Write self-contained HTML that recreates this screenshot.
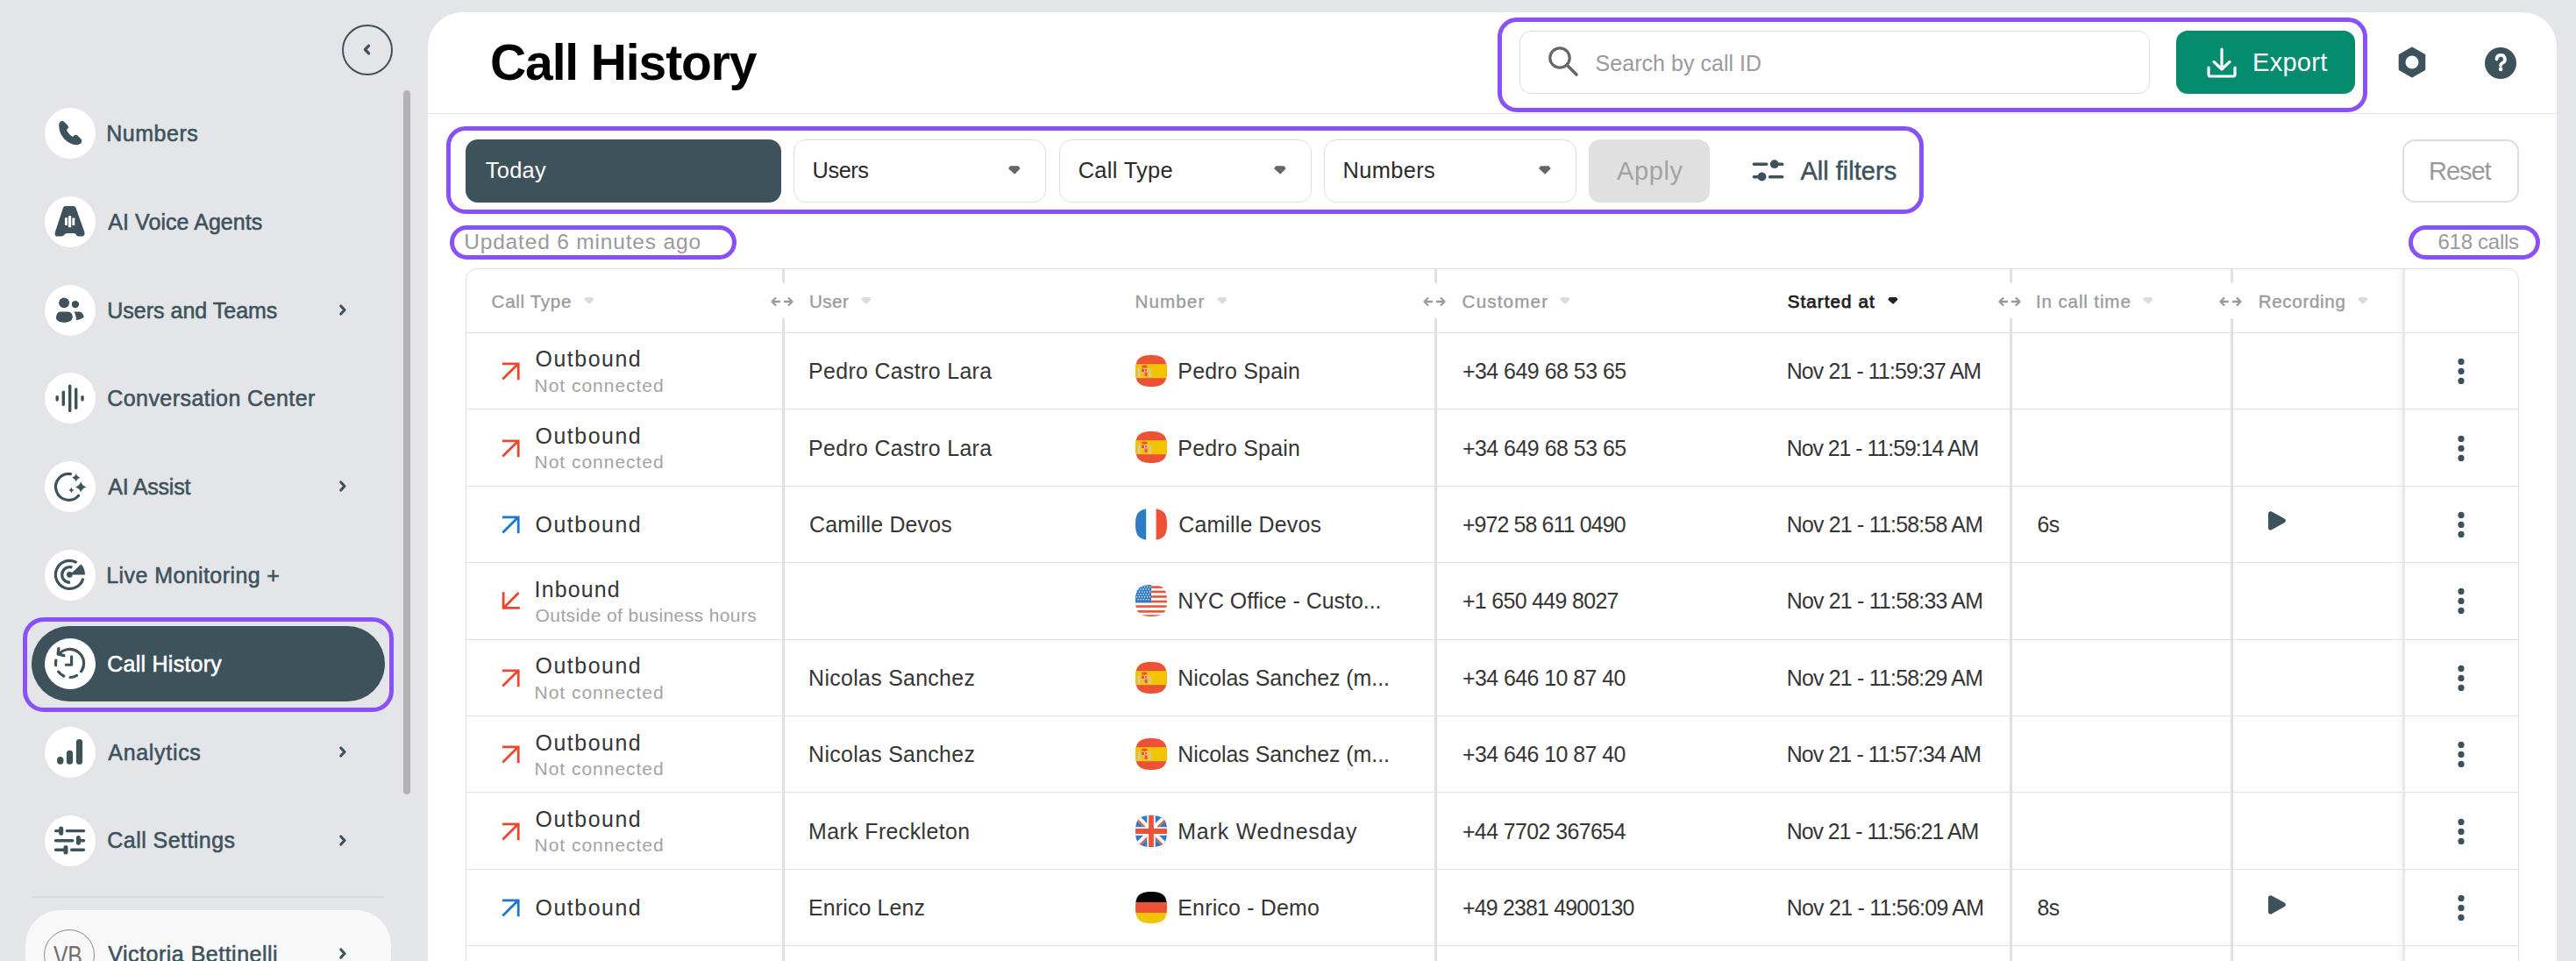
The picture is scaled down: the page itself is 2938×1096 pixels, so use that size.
<!DOCTYPE html><html><head><meta charset="utf-8"><style>html,body{margin:0;padding:0}body{width:2938px;height:1096px;overflow:hidden;position:relative;background:#e4e5e9;font-family:"Liberation Sans",sans-serif}.a{position:absolute}.t{position:absolute;line-height:1em;white-space:nowrap}svg.a{overflow:visible}</style></head><body><div class="a" style="left:390px;top:28px;width:54px;height:54px;border:2px solid #3e525c;border-radius:50%"></div>
<svg class="a" style="left:409px;top:46px" width="20" height="22" viewBox="0 0 20 22"><path d="M11.6 6.2 L7.4 10.5 L11.6 14.8" fill="none" stroke="#3e525c" stroke-width="3.3" stroke-linecap="round" stroke-linejoin="round"/></svg>
<div class="a" style="left:460px;top:103px;width:8px;height:803px;background:#b3b3b3;border-radius:4px"></div>
<div class="a" style="left:26px;top:704px;width:423px;height:108px;box-sizing:border-box;border:5px solid #8950fc;border-radius:24px"></div>
<div class="a" style="left:36px;top:714px;width:403px;height:86px;background:#3e525c;border-radius:43px"></div>
<div class="a" style="left:50.5px;top:123.0px;width:58px;height:58px;background:#fff;border-radius:50%"></div>
<svg class="a" style="left:50px;top:123.0px" width="60" height="60" viewBox="0 0 60 60"><path d="M17.3 21 C17 17.5 18.5 15 21 15 C22 15 22.8 15.5 23.5 16.2 L27.2 19.9 C28.2 20.9 28.2 22.7 27.2 23.7 L25.8 25.2 C27.5 28.5 29.8 31 33 33 L34.6 31.5 C35.6 30.5 37.3 30.5 38.3 31.5 L42.4 35.6 C43.7 36.9 43.6 39.5 41.8 40.8 C40.5 41.8 38.8 42.3 37 42.2 C31 42 25.2 38 21.8 33.5 C19 30 17.5 25.5 17.3 21 Z" fill="#3e525c"/></svg>
<div class="t" style="left:121.30px;top:139.83px;font-size:25px;color:#3e525c;font-weight:400;-webkit-text-stroke:0.55px currentColor;letter-spacing:0.500px">Numbers</div>
<div class="a" style="left:50.5px;top:223.9px;width:58px;height:58px;background:#fff;border-radius:50%"></div>
<svg class="a" style="left:50px;top:223.0px" width="60" height="60" viewBox="0 0 60 60"><path d="M24.7 11.9 H33.7 C35 11.9 36 12.7 36.5 14 L46.3 41.5 C46.9 44 46 46.6 43.8 46.6 H38.8 C37.5 46.6 36.5 43.1 34.5 43.1 H26.5 C24.5 43.1 22 46.6 20.6 46.6 H15 C13 46.6 12.3 44.5 12.8 42 L22 14 C22.5 12.7 23.5 11.9 24.7 11.9 Z" fill="#3e525c"/><rect x="24" y="25.3" width="2.9" height="8.7" fill="#fff"/><rect x="27.9" y="23.1" width="3.3" height="13.1" fill="#fff"/><rect x="32.4" y="25.6" width="2.9" height="8.4" fill="#fff"/></svg>
<div class="t" style="left:123.30px;top:240.73px;font-size:25px;color:#3e525c;font-weight:400;-webkit-text-stroke:0.55px currentColor;letter-spacing:0.064px">AI Voice Agents</div>
<div class="a" style="left:50.5px;top:324.9px;width:58px;height:58px;background:#fff;border-radius:50%"></div>
<svg class="a" style="left:50px;top:324.0px" width="60" height="60" viewBox="0 0 60 60"><circle cx="23.1" cy="21.3" r="5.9" fill="#3e525c"/><circle cx="35.9" cy="23.1" r="4.2" fill="#3e525c"/><path d="M18.5 31.6 H27.5 C30.5 31.6 32.8 34.5 32.8 37.8 C32.8 41.5 28.5 43.8 23.2 43.8 C17.8 43.8 14 41.5 14 38.8 C14 35 15.8 31.6 18.5 31.6 Z" fill="#3e525c"/><path d="M34.3 31.5 H40.3 C43 31.5 45.2 34.5 45.8 37.6 C43.5 39.8 40 41 36.9 41 C37 37.5 36.2 34 34.3 31.5 Z" fill="#3e525c"/></svg>
<div class="t" style="left:122.30px;top:341.73px;font-size:25px;color:#3e525c;font-weight:400;-webkit-text-stroke:0.55px currentColor;letter-spacing:0.000px">Users and Teams</div>
<svg class="a" style="left:381.5px;top:343.9px" width="16" height="20" viewBox="0 0 16 20"><path d="M6.8 5.0 L11.0 9.5 L6.8 14.0" fill="none" stroke="#3e525c" stroke-width="3.2" stroke-linecap="round" stroke-linejoin="round"/></svg>
<div class="a" style="left:50.5px;top:425.3px;width:58px;height:58px;background:#fff;border-radius:50%"></div>
<svg class="a" style="left:50px;top:425.0px" width="60" height="60" viewBox="0 0 60 60"><rect x="13.5" y="25.9" width="3.4" height="6.899999999999999" rx="1.7" fill="#3e525c"/><rect x="20.6" y="20.6" width="3.4" height="17.5" rx="1.7" fill="#3e525c"/><rect x="28.0" y="13.4" width="3.4" height="31.9" rx="1.7" fill="#3e525c"/><rect x="35.0" y="17.2" width="3.4" height="24.7" rx="1.7" fill="#3e525c"/><rect x="42.3" y="25.9" width="3.4" height="6.899999999999999" rx="1.7" fill="#3e525c"/></svg>
<div class="t" style="left:122.30px;top:442.13px;font-size:25px;color:#3e525c;font-weight:400;-webkit-text-stroke:0.55px currentColor;letter-spacing:0.428px">Conversation Center</div>
<div class="a" style="left:50.5px;top:526.1px;width:58px;height:58px;background:#fff;border-radius:50%"></div>
<svg class="a" style="left:50px;top:526.0px" width="60" height="60" viewBox="0 0 60 60"><path d="M30.5 14.6 A14.9 14.9 0 1 0 39.6 39.2" fill="none" stroke="#3e525c" stroke-width="3.2" stroke-linecap="round"/><path d="M42.2 23.2 Q43.564 28.035999999999998 48.400000000000006 29.4 Q43.564 30.764 42.2 35.6 Q40.836000000000006 30.764 36.0 29.4 Q40.836000000000006 28.035999999999998 42.2 23.2 Z" fill="#3e525c"/><path d="M36.75 13.95 Q37.806 17.694 41.55 18.75 Q37.806 19.806 36.75 23.55 Q35.694 19.806 31.95 18.75 Q35.694 17.694 36.75 13.95 Z" fill="#3e525c"/><path d="M31.4 30.0 Q32.082 32.418 34.5 33.1 Q32.082 33.782000000000004 31.4 36.2 Q30.718 33.782000000000004 28.299999999999997 33.1 Q30.718 32.418 31.4 30.0 Z" fill="#3e525c"/></svg>
<div class="t" style="left:123.30px;top:542.93px;font-size:25px;color:#3e525c;font-weight:400;-webkit-text-stroke:0.55px currentColor;letter-spacing:-0.225px">AI Assist</div>
<svg class="a" style="left:381.5px;top:545.1px" width="16" height="20" viewBox="0 0 16 20"><path d="M6.8 5.0 L11.0 9.5 L6.8 14.0" fill="none" stroke="#3e525c" stroke-width="3.2" stroke-linecap="round" stroke-linejoin="round"/></svg>
<div class="a" style="left:50.5px;top:626.8px;width:58px;height:58px;background:#fff;border-radius:50%"></div>
<svg class="a" style="left:50px;top:626.0px" width="60" height="60" viewBox="0 0 60 60"><path d="M37.64 15.69 A16 16 0 1 0 44.85 33.54" fill="none" stroke="#3e525c" stroke-width="3.2"/><path d="M32.4 21.1 A8.8 8.8 0 1 0 30.0 38.2" fill="none" stroke="#3e525c" stroke-width="3.2"/><circle cx="29.4" cy="29.4" r="3.3" fill="#3e525c"/><path d="M29.4 29.4 L42.48 17.62 A17.6 17.6 0 0 1 47 29.4 Z" fill="#3e525c"/></svg>
<div class="t" style="left:121.30px;top:643.63px;font-size:25px;color:#3e525c;font-weight:400;-webkit-text-stroke:0.55px currentColor;letter-spacing:0.412px">Live Monitoring +</div>
<div class="a" style="left:50.5px;top:728.0px;width:58px;height:58px;background:#fff;border-radius:50%"></div>
<svg class="a" style="left:50px;top:727.0px" width="60" height="60" viewBox="0 0 60 60"><path d="M17.24 19.22 A16 16 0 0 1 42.6 38.7" fill="none" stroke="#3e525c" stroke-width="3.2" stroke-linecap="round"/><path d="M37.5 43.36 A16 16 0 0 1 30.06 45.49 M22.74 44 A16 16 0 0 1 16.72 39.13 M13.66 31.73 A16 16 0 0 1 13.85 26.17" fill="none" stroke="#3e525c" stroke-width="3.2" stroke-linecap="round"/><path d="M16.9 12.8 L16.2 18.9 L22.8 20.7" fill="none" stroke="#3e525c" stroke-width="3.4" stroke-linecap="round" stroke-linejoin="round"/><path d="M31.6 21.9 V31.25 H25.3" fill="none" stroke="#3e525c" stroke-width="3.2" stroke-linecap="round" stroke-linejoin="round"/></svg>
<div class="t" style="left:122.30px;top:744.83px;font-size:25px;color:#fff;font-weight:400;-webkit-text-stroke:0.55px currentColor;letter-spacing:0.245px">Call History</div>
<div class="a" style="left:50.5px;top:828.8px;width:58px;height:58px;background:#fff;border-radius:50%"></div>
<svg class="a" style="left:50px;top:828.0px" width="60" height="60" viewBox="0 0 60 60"><ellipse cx="18.75" cy="39.4" rx="3.75" ry="4.3" fill="#3e525c"/><rect x="25.9" y="27.8" width="7.2" height="16" rx="3.6" fill="#3e525c"/><rect x="36.9" y="15" width="7.2" height="28.75" rx="3.6" fill="#3e525c"/></svg>
<div class="t" style="left:123.30px;top:845.63px;font-size:25px;color:#3e525c;font-weight:400;-webkit-text-stroke:0.55px currentColor;letter-spacing:0.688px">Analytics</div>
<svg class="a" style="left:381.5px;top:847.8px" width="16" height="20" viewBox="0 0 16 20"><path d="M6.8 5.0 L11.0 9.5 L6.8 14.0" fill="none" stroke="#3e525c" stroke-width="3.2" stroke-linecap="round" stroke-linejoin="round"/></svg>
<div class="a" style="left:50.5px;top:929.6px;width:58px;height:58px;background:#fff;border-radius:50%"></div>
<svg class="a" style="left:50px;top:929.0px" width="60" height="60" viewBox="0 0 60 60"><path d="M13.6 18.6 H17.5 M26.3 18.6 H45.6 M13.6 29.7 H32.8 M41.9 29.7 H45.6 M13.6 40.3 H22.5 M31.6 40.3 H45.4" stroke="#3e525c" stroke-width="3.4" stroke-linecap="round"/><rect x="17.2" y="13.4" width="5" height="10.4" rx="2.5" fill="#3e525c"/><rect x="36.9" y="24" width="5" height="10.7" rx="2.5" fill="#3e525c"/><rect x="22.5" y="35" width="5" height="10.6" rx="2.5" fill="#3e525c"/></svg>
<div class="t" style="left:122.30px;top:946.43px;font-size:25px;color:#3e525c;font-weight:400;-webkit-text-stroke:0.55px currentColor;letter-spacing:0.450px">Call Settings</div>
<svg class="a" style="left:381.5px;top:948.6px" width="16" height="20" viewBox="0 0 16 20"><path d="M6.8 5.0 L11.0 9.5 L6.8 14.0" fill="none" stroke="#3e525c" stroke-width="3.2" stroke-linecap="round" stroke-linejoin="round"/></svg>
<div class="a" style="left:36px;top:1022px;width:403px;height:2px;background:#d9dadd"></div>
<div class="a" style="left:29px;top:1038px;width:417px;height:120px;background:#f8f8f8;border-radius:40px"></div>
<div class="a" style="left:50px;top:1060px;width:56px;height:56px;border:1px solid #8a8a8a;border-radius:50%"></div>
<div class="t" style="left:61px;top:1074.5px;font-size:31px;color:#707070;transform:scaleX(0.80);transform-origin:0 0;letter-spacing:-0.5px">VB</div>
<div class="t" style="left:123.30px;top:1075.83px;font-size:25px;color:#3e525c;font-weight:400;-webkit-text-stroke:0.55px currentColor;letter-spacing:0.500px">Victoria Bettinelli</div>
<svg class="a" style="left:381.5px;top:1078px" width="16" height="20" viewBox="0 0 16 20"><path d="M6.8 5.0 L11.0 9.5 L6.8 14.0" fill="none" stroke="#3e525c" stroke-width="3.2" stroke-linecap="round" stroke-linejoin="round"/></svg>
<div class="a" style="left:488px;top:14px;width:2428px;height:1200px;background:#fff;border-radius:39px 39px 0 0"></div>
<div class="a" style="left:488px;top:129px;width:2428px;height:1px;background:#e3e3e3"></div>
<div class="t" style="left:559.00px;top:42.74px;font-size:57px;color:#000;font-weight:700;letter-spacing:-1.118px">Call History</div>
<div class="a" style="left:1708px;top:20px;width:992px;height:108px;box-sizing:border-box;border:5px solid #8950fc;border-radius:22px"></div>
<div class="a" style="left:1733px;top:35px;width:719px;height:72px;box-sizing:border-box;border:1.5px solid #dcdcdc;border-radius:13px"></div>
<svg class="a" style="left:1760px;top:48px" width="44" height="44" viewBox="0 0 44 44"><circle cx="19" cy="18" r="11.2" fill="none" stroke="#666" stroke-width="3.2"/><path d="M27 26 L38 37" stroke="#666" stroke-width="3.6" stroke-linecap="round"/></svg>
<div class="t" style="left:1819.60px;top:59.63px;font-size:25px;color:#9a9a9a;font-weight:400;letter-spacing:0.037px">Search by call ID</div>
<div class="a" style="left:2482px;top:35px;width:204px;height:72px;background:#058b6d;border-radius:13px"></div>
<svg class="a" style="left:2512px;top:50px" width="44" height="44" viewBox="0 0 44 44"><path d="M22 6 V29 M13 20.5 L22 29 L31 20.5" fill="none" stroke="#fff" stroke-width="3.2" stroke-linecap="round" stroke-linejoin="round"/><path d="M7 27 V35 a2 2 0 0 0 2 2 H35 a2 2 0 0 0 2 -2 V27" fill="none" stroke="#fff" stroke-width="3.2" stroke-linecap="round" stroke-linejoin="round"/></svg>
<div class="t" style="left:2569.00px;top:57.45px;font-size:29px;color:#fff;font-weight:400;letter-spacing:0.300px">Export</div>
<svg class="a" style="left:2730.6px;top:51.4px" width="40" height="40" viewBox="0 0 40 40"><path d="M20 3.9 L34 12 V28 L20 36.1 L6 28 V12 Z" fill="#3e525c" stroke="#3e525c" stroke-width="2.6" stroke-linejoin="round"/><circle cx="20" cy="20" r="7.5" fill="#fff"/></svg>
<svg class="a" style="left:2833px;top:53px" width="38" height="38" viewBox="0 0 38 38"><circle cx="19" cy="19" r="18" fill="#3e525c"/><path d="M14.5 14.6 a4.7 4.7 0 1 1 6.9 4.1 c-1.5 0.8 -2.3 1.5 -2.3 3.1" fill="none" stroke="#fff" stroke-width="3.7" stroke-linecap="round"/><circle cx="19.1" cy="25.9" r="2.3" fill="#fff"/></svg>
<div class="a" style="left:509px;top:144px;width:1685px;height:100px;box-sizing:border-box;border:5px solid #8950fc;border-radius:22px"></div>
<div class="a" style="left:531px;top:159px;width:360px;height:72px;background:#3e525c;border-radius:14px"></div>
<div class="t" style="left:553.70px;top:182.49px;font-size:25.4px;color:#fff;font-weight:400;letter-spacing:0.325px">Today</div>
<div class="a" style="left:905px;top:159px;width:288px;height:72px;box-sizing:border-box;border:1.5px solid #dedede;border-radius:14px"></div>
<div class="t" style="left:926.60px;top:182.49px;font-size:25.4px;color:#2a2a2a;font-weight:400;letter-spacing:-0.475px">Users</div>
<svg class="a" style="left:1146.75px;top:184px" width="20" height="20" viewBox="0 0 20 20"><path d="M5.60 6.10 L14.00 6.10 L15.60 8.10 L10.20 13.60 L4.10 8.10 Z" fill="#666" stroke="#666" stroke-width="1.60" stroke-linejoin="round"/></svg>
<div class="a" style="left:1208px;top:159px;width:288px;height:72px;box-sizing:border-box;border:1.5px solid #dedede;border-radius:14px"></div>
<div class="t" style="left:1229.70px;top:182.49px;font-size:25.4px;color:#2a2a2a;font-weight:400;letter-spacing:0.325px">Call Type</div>
<svg class="a" style="left:1449.75px;top:184px" width="20" height="20" viewBox="0 0 20 20"><path d="M5.60 6.10 L14.00 6.10 L15.60 8.10 L10.20 13.60 L4.10 8.10 Z" fill="#666" stroke="#666" stroke-width="1.60" stroke-linejoin="round"/></svg>
<div class="a" style="left:1510px;top:159px;width:288px;height:72px;box-sizing:border-box;border:1.5px solid #dedede;border-radius:14px"></div>
<div class="t" style="left:1531.50px;top:182.49px;font-size:25.4px;color:#2a2a2a;font-weight:400;letter-spacing:0.383px">Numbers</div>
<svg class="a" style="left:1751.75px;top:184px" width="20" height="20" viewBox="0 0 20 20"><path d="M5.60 6.10 L14.00 6.10 L15.60 8.10 L10.20 13.60 L4.10 8.10 Z" fill="#666" stroke="#666" stroke-width="1.60" stroke-linejoin="round"/></svg>
<div class="a" style="left:1812px;top:159px;width:138px;height:72px;background:#e0e0e0;border-radius:13px"></div>
<div class="t" style="left:1844.00px;top:181.45px;font-size:29px;color:#a2a2a2;font-weight:400;letter-spacing:0.625px">Apply</div>
<svg class="a" style="left:1990px;top:170px" width="60" height="50" viewBox="0 0 60 50"><path d="M10.5 17.2 H24.7 M33.8 17.2 H42.7 M10.5 31.7 H19.5 M28.6 31.7 H42.7" stroke="#3e525c" stroke-width="3.6" stroke-linecap="round"/><circle cx="33.8" cy="17.2" r="4.9" fill="#3e525c"/><circle cx="19.5" cy="31.5" r="4.9" fill="#3e525c"/></svg>
<div class="t" style="left:2053.40px;top:180.95px;font-size:29px;color:#3e525c;font-weight:400;-webkit-text-stroke:0.5px currentColor;letter-spacing:0.020px">All filters</div>
<div class="a" style="left:2740px;top:159px;width:133px;height:72px;box-sizing:border-box;border:2px solid #dedede;border-radius:14px"></div>
<div class="t" style="left:2770.00px;top:181.45px;font-size:29px;color:#9a9a9a;font-weight:400;letter-spacing:-1.050px">Reset</div>
<div class="a" style="left:513px;top:257px;width:327px;height:39px;box-sizing:border-box;border:5px solid #8950fc;border-radius:20px"></div>
<div class="t" style="left:529.20px;top:263.76px;font-size:24.5px;color:#9a9a9a;font-weight:400;letter-spacing:0.825px">Updated 6 minutes ago</div>
<div class="a" style="left:2747px;top:257px;width:150px;height:39px;box-sizing:border-box;border:5px solid #8950fc;border-radius:20px"></div>
<div class="t" style="left:2780.50px;top:263.68px;font-size:24px;color:#9a9a9a;font-weight:400;letter-spacing:-0.275px">618 calls</div>
<div class="a" style="left:531px;top:306px;width:2342px;height:900px;box-sizing:border-box;border:1.5px solid #dedede;border-radius:13px;overflow:hidden"><div style="position:absolute;left:2200px;top:0;width:8px;height:900px;background:linear-gradient(to right,rgba(0,0,0,0),rgba(0,0,0,0.03))"></div><div style="position:absolute;left:2207.5px;top:0;width:3.5px;height:900px;background:rgba(0,0,0,0.085)"></div></div>
<div class="a" style="left:531px;top:378.9px;width:2342px;height:1px;background:#e2e2e2"></div>
<div class="a" style="left:2742px;top:379.9px;width:130px;height:6px;background:linear-gradient(to bottom,rgba(0,0,0,0.025),rgba(0,0,0,0))"></div>
<div class="a" style="left:531px;top:466.33px;width:2342px;height:1px;background:#e2e2e2"></div>
<div class="a" style="left:2742px;top:467.33px;width:130px;height:6px;background:linear-gradient(to bottom,rgba(0,0,0,0.025),rgba(0,0,0,0))"></div>
<div class="a" style="left:531px;top:553.76px;width:2342px;height:1px;background:#e2e2e2"></div>
<div class="a" style="left:2742px;top:554.76px;width:130px;height:6px;background:linear-gradient(to bottom,rgba(0,0,0,0.025),rgba(0,0,0,0))"></div>
<div class="a" style="left:531px;top:641.19px;width:2342px;height:1px;background:#e2e2e2"></div>
<div class="a" style="left:2742px;top:642.19px;width:130px;height:6px;background:linear-gradient(to bottom,rgba(0,0,0,0.025),rgba(0,0,0,0))"></div>
<div class="a" style="left:531px;top:728.62px;width:2342px;height:1px;background:#e2e2e2"></div>
<div class="a" style="left:2742px;top:729.62px;width:130px;height:6px;background:linear-gradient(to bottom,rgba(0,0,0,0.025),rgba(0,0,0,0))"></div>
<div class="a" style="left:531px;top:816.05px;width:2342px;height:1px;background:#e2e2e2"></div>
<div class="a" style="left:2742px;top:817.05px;width:130px;height:6px;background:linear-gradient(to bottom,rgba(0,0,0,0.025),rgba(0,0,0,0))"></div>
<div class="a" style="left:531px;top:903.48px;width:2342px;height:1px;background:#e2e2e2"></div>
<div class="a" style="left:2742px;top:904.48px;width:130px;height:6px;background:linear-gradient(to bottom,rgba(0,0,0,0.025),rgba(0,0,0,0))"></div>
<div class="a" style="left:531px;top:990.91px;width:2342px;height:1px;background:#e2e2e2"></div>
<div class="a" style="left:2742px;top:991.91px;width:130px;height:6px;background:linear-gradient(to bottom,rgba(0,0,0,0.025),rgba(0,0,0,0))"></div>
<div class="a" style="left:531px;top:1078.3400000000001px;width:2342px;height:1px;background:#e2e2e2"></div>
<div class="a" style="left:2742px;top:1079.3400000000001px;width:130px;height:6px;background:linear-gradient(to bottom,rgba(0,0,0,0.025),rgba(0,0,0,0))"></div>
<div class="a" style="left:892.0px;top:306px;width:3px;height:17px;background:#e1e1e1"></div>
<div class="a" style="left:892.0px;top:363px;width:3px;height:900px;background:#e1e1e1"></div>
<svg class="a" style="left:878.0px;top:336px" width="28" height="16" viewBox="0 0 28 16"><path d="M11 8 H2.5 M6.5 4 L2.5 8 L6.5 12 M17 8 H25.5 M21.5 4 L25.5 8 L21.5 12" fill="none" stroke="#9a9a9a" stroke-width="2.3" stroke-linecap="round" stroke-linejoin="round"/></svg>
<div class="a" style="left:1636.0px;top:306px;width:3px;height:17px;background:#e1e1e1"></div>
<div class="a" style="left:1636.0px;top:363px;width:3px;height:900px;background:#e1e1e1"></div>
<svg class="a" style="left:1622.0px;top:336px" width="28" height="16" viewBox="0 0 28 16"><path d="M11 8 H2.5 M6.5 4 L2.5 8 L6.5 12 M17 8 H25.5 M21.5 4 L25.5 8 L21.5 12" fill="none" stroke="#9a9a9a" stroke-width="2.3" stroke-linecap="round" stroke-linejoin="round"/></svg>
<div class="a" style="left:2292.0px;top:306px;width:3px;height:17px;background:#e1e1e1"></div>
<div class="a" style="left:2292.0px;top:363px;width:3px;height:900px;background:#e1e1e1"></div>
<svg class="a" style="left:2278.0px;top:336px" width="28" height="16" viewBox="0 0 28 16"><path d="M11 8 H2.5 M6.5 4 L2.5 8 L6.5 12 M17 8 H25.5 M21.5 4 L25.5 8 L21.5 12" fill="none" stroke="#9a9a9a" stroke-width="2.3" stroke-linecap="round" stroke-linejoin="round"/></svg>
<div class="a" style="left:2544.0px;top:306px;width:3px;height:17px;background:#e1e1e1"></div>
<div class="a" style="left:2544.0px;top:363px;width:3px;height:900px;background:#e1e1e1"></div>
<svg class="a" style="left:2530.0px;top:336px" width="28" height="16" viewBox="0 0 28 16"><path d="M11 8 H2.5 M6.5 4 L2.5 8 L6.5 12 M17 8 H25.5 M21.5 4 L25.5 8 L21.5 12" fill="none" stroke="#9a9a9a" stroke-width="2.3" stroke-linecap="round" stroke-linejoin="round"/></svg>
<div class="t" style="left:560.60px;top:333.76px;font-size:20.6px;color:#9b9b9b;font-weight:400;-webkit-text-stroke:0.35px currentColor;letter-spacing:0.662px">Call Type</div>
<svg class="a" style="left:661.5px;top:333px" width="20" height="20" viewBox="0 0 20 20"><path d="M6.28 6.75 L13.38 6.75 L14.74 8.42 L10.17 13.00 L5.01 8.42 Z" fill="#dcdcdc" stroke="#dcdcdc" stroke-width="1.35" stroke-linejoin="round"/></svg>
<div class="t" style="left:923.00px;top:333.76px;font-size:20.6px;color:#9b9b9b;font-weight:400;-webkit-text-stroke:0.35px currentColor;letter-spacing:0.467px">User</div>
<svg class="a" style="left:978px;top:333px" width="20" height="20" viewBox="0 0 20 20"><path d="M6.28 6.75 L13.38 6.75 L14.74 8.42 L10.17 13.00 L5.01 8.42 Z" fill="#dcdcdc" stroke="#dcdcdc" stroke-width="1.35" stroke-linejoin="round"/></svg>
<div class="t" style="left:1294.60px;top:333.76px;font-size:20.6px;color:#9b9b9b;font-weight:400;-webkit-text-stroke:0.35px currentColor;letter-spacing:1.080px">Number</div>
<svg class="a" style="left:1383.5px;top:333px" width="20" height="20" viewBox="0 0 20 20"><path d="M6.28 6.75 L13.38 6.75 L14.74 8.42 L10.17 13.00 L5.01 8.42 Z" fill="#dcdcdc" stroke="#dcdcdc" stroke-width="1.35" stroke-linejoin="round"/></svg>
<div class="t" style="left:1667.60px;top:333.76px;font-size:20.6px;color:#9b9b9b;font-weight:400;-webkit-text-stroke:0.35px currentColor;letter-spacing:1.171px">Customer</div>
<svg class="a" style="left:1775px;top:333px" width="20" height="20" viewBox="0 0 20 20"><path d="M6.28 6.75 L13.38 6.75 L14.74 8.42 L10.17 13.00 L5.01 8.42 Z" fill="#dcdcdc" stroke="#dcdcdc" stroke-width="1.35" stroke-linejoin="round"/></svg>
<div class="t" style="left:2322.00px;top:333.76px;font-size:20.6px;color:#9b9b9b;font-weight:400;-webkit-text-stroke:0.35px currentColor;letter-spacing:0.855px">In call time</div>
<svg class="a" style="left:2439.5px;top:333px" width="20" height="20" viewBox="0 0 20 20"><path d="M6.28 6.75 L13.38 6.75 L14.74 8.42 L10.17 13.00 L5.01 8.42 Z" fill="#dcdcdc" stroke="#dcdcdc" stroke-width="1.35" stroke-linejoin="round"/></svg>
<div class="t" style="left:2575.70px;top:333.76px;font-size:20.6px;color:#9b9b9b;font-weight:400;-webkit-text-stroke:0.35px currentColor;letter-spacing:0.662px">Recording</div>
<svg class="a" style="left:2685px;top:333px" width="20" height="20" viewBox="0 0 20 20"><path d="M6.28 6.75 L13.38 6.75 L14.74 8.42 L10.17 13.00 L5.01 8.42 Z" fill="#dcdcdc" stroke="#dcdcdc" stroke-width="1.35" stroke-linejoin="round"/></svg>
<div class="t" style="left:2038.70px;top:333.76px;font-size:20.6px;color:#1e1e1e;font-weight:400;-webkit-text-stroke:0.75px currentColor;letter-spacing:1.078px">Started at</div>
<svg class="a" style="left:2148.5px;top:333px" width="20" height="20" viewBox="0 0 20 20"><path d="M6.28 6.75 L13.38 6.75 L14.74 8.42 L10.17 13.00 L5.01 8.42 Z" fill="#222" stroke="#222" stroke-width="1.35" stroke-linejoin="round"/></svg>
<svg class="a" style="left:572px;top:412.115px" width="22" height="22" viewBox="0 0 22 22"><path d="M0.9 2.95 H19.2 V21.3 M1.3 20.6 L18.4 3.5" fill="none" stroke="#e8492e" stroke-width="2.8" stroke-linejoin="miter"/></svg>
<div class="t" style="left:610.60px;top:397.43px;font-size:24.9px;color:#353535;font-weight:400;letter-spacing:1.529px">Outbound</div>
<div class="t" style="left:609.60px;top:428.83px;font-size:21px;color:#a3a3a3;font-weight:400;letter-spacing:0.967px">Not connected</div>
<div class="t" style="left:922.10px;top:411.13px;font-size:24.9px;color:#353535;font-weight:400;letter-spacing:0.350px">Pedro Castro Lara</div>
<svg class="a" style="left:1295.2px;top:405.01px" width="36" height="36" viewBox="0 0 36 36"><defs><clipPath id="fc1"><path d="M18 0 C31.5 0 36 4.5 36 18 C36 31.5 31.5 36 18 36 C4.5 36 0 31.5 0 18 C0 4.5 4.5 0 18 0 Z"/></clipPath></defs><g clip-path="url(#fc1)"><rect width="36" height="36" fill="#ee5236"/><rect y="10.2" width="36" height="16" fill="#f2c400"/><rect x="3.2" y="15.6" width="1.8" height="8.6" fill="#c9ccd6"/><rect x="15.6" y="15.6" width="1.8" height="8.6" fill="#c9ccd6"/><rect x="2.4" y="23.6" width="3.4" height="1.2" fill="#c9ccd6"/><rect x="14.8" y="23.6" width="3.4" height="1.2" fill="#c9ccd6"/><ellipse cx="10.3" cy="13.1" rx="3.4" ry="1.6" fill="#ee5236"/><path d="M6.7 15.4 H13.8 V21.6 Q13.8 24.6 10.25 24.6 Q6.7 24.6 6.7 21.6 Z" fill="#f3d7c8"/><rect x="6.9" y="15.6" width="3.2" height="3.6" fill="#ee5236"/><rect x="10.4" y="19.4" width="3.2" height="4.6" fill="#ee5236"/><rect x="6.9" y="19.4" width="3.2" height="4.6" fill="#f2c400"/><rect x="11" y="16" width="2" height="2.6" fill="#ee5236"/></g></svg>
<div class="t" style="left:1343.30px;top:411.13px;font-size:24.9px;color:#353535;font-weight:400;letter-spacing:0.260px">Pedro Spain</div>
<div class="t" style="left:1667.90px;top:411.13px;font-size:24.9px;color:#353535;font-weight:400;letter-spacing:-0.480px">+34 649 68 53 65</div>
<div class="t" style="left:2037.70px;top:411.13px;font-size:24.9px;color:#353535;font-weight:400;letter-spacing:-0.868px">Nov 21 - 11:59:37 AM</div>
<svg class="a" style="left:2796.9px;top:403.115px" width="20" height="40" viewBox="0 0 20 40"><circle cx="10" cy="9.4" r="3.6" fill="#3e525c"/><circle cx="10" cy="20.4" r="3.6" fill="#3e525c"/><circle cx="10" cy="31.4" r="3.6" fill="#3e525c"/></svg>
<svg class="a" style="left:572px;top:499.54499999999996px" width="22" height="22" viewBox="0 0 22 22"><path d="M0.9 2.95 H19.2 V21.3 M1.3 20.6 L18.4 3.5" fill="none" stroke="#e8492e" stroke-width="2.8" stroke-linejoin="miter"/></svg>
<div class="t" style="left:610.60px;top:484.86px;font-size:24.9px;color:#353535;font-weight:400;letter-spacing:1.529px">Outbound</div>
<div class="t" style="left:609.60px;top:516.26px;font-size:21px;color:#a3a3a3;font-weight:400;letter-spacing:0.967px">Not connected</div>
<div class="t" style="left:922.10px;top:498.56px;font-size:24.9px;color:#353535;font-weight:400;letter-spacing:0.350px">Pedro Castro Lara</div>
<svg class="a" style="left:1295.2px;top:492.44px" width="36" height="36" viewBox="0 0 36 36"><defs><clipPath id="fc2"><path d="M18 0 C31.5 0 36 4.5 36 18 C36 31.5 31.5 36 18 36 C4.5 36 0 31.5 0 18 C0 4.5 4.5 0 18 0 Z"/></clipPath></defs><g clip-path="url(#fc2)"><rect width="36" height="36" fill="#ee5236"/><rect y="10.2" width="36" height="16" fill="#f2c400"/><rect x="3.2" y="15.6" width="1.8" height="8.6" fill="#c9ccd6"/><rect x="15.6" y="15.6" width="1.8" height="8.6" fill="#c9ccd6"/><rect x="2.4" y="23.6" width="3.4" height="1.2" fill="#c9ccd6"/><rect x="14.8" y="23.6" width="3.4" height="1.2" fill="#c9ccd6"/><ellipse cx="10.3" cy="13.1" rx="3.4" ry="1.6" fill="#ee5236"/><path d="M6.7 15.4 H13.8 V21.6 Q13.8 24.6 10.25 24.6 Q6.7 24.6 6.7 21.6 Z" fill="#f3d7c8"/><rect x="6.9" y="15.6" width="3.2" height="3.6" fill="#ee5236"/><rect x="10.4" y="19.4" width="3.2" height="4.6" fill="#ee5236"/><rect x="6.9" y="19.4" width="3.2" height="4.6" fill="#f2c400"/><rect x="11" y="16" width="2" height="2.6" fill="#ee5236"/></g></svg>
<div class="t" style="left:1343.30px;top:498.56px;font-size:24.9px;color:#353535;font-weight:400;letter-spacing:0.260px">Pedro Spain</div>
<div class="t" style="left:1667.90px;top:498.56px;font-size:24.9px;color:#353535;font-weight:400;letter-spacing:-0.480px">+34 649 68 53 65</div>
<div class="t" style="left:2037.70px;top:498.56px;font-size:24.9px;color:#353535;font-weight:400;letter-spacing:-1.021px">Nov 21 - 11:59:14 AM</div>
<svg class="a" style="left:2796.9px;top:490.54499999999996px" width="20" height="40" viewBox="0 0 20 40"><circle cx="10" cy="9.4" r="3.6" fill="#3e525c"/><circle cx="10" cy="20.4" r="3.6" fill="#3e525c"/><circle cx="10" cy="31.4" r="3.6" fill="#3e525c"/></svg>
<svg class="a" style="left:572px;top:586.975px" width="22" height="22" viewBox="0 0 22 22"><path d="M0.9 2.95 H19.2 V21.3 M1.3 20.6 L18.4 3.5" fill="none" stroke="#1f78c8" stroke-width="2.8" stroke-linejoin="miter"/></svg>
<div class="t" style="left:610.60px;top:585.99px;font-size:24.9px;color:#353535;font-weight:400;letter-spacing:1.529px">Outbound</div>
<div class="t" style="left:923.10px;top:585.99px;font-size:24.9px;color:#353535;font-weight:400;letter-spacing:0.175px">Camille Devos</div>
<svg class="a" style="left:1295.2px;top:579.88px" width="36" height="36" viewBox="0 0 36 36"><defs><clipPath id="fc3"><path d="M18 0 C31.5 0 36 4.5 36 18 C36 31.5 31.5 36 18 36 C4.5 36 0 31.5 0 18 C0 4.5 4.5 0 18 0 Z"/></clipPath></defs><g clip-path="url(#fc3)"><rect width="12.4" height="36" fill="#2f7cc6"/><rect x="12.4" width="11.2" height="36" fill="#fff"/><rect x="23.6" width="12.4" height="36" fill="#ee5236"/></g></svg>
<div class="t" style="left:1344.30px;top:585.99px;font-size:24.9px;color:#353535;font-weight:400;letter-spacing:0.175px">Camille Devos</div>
<div class="t" style="left:1667.90px;top:585.99px;font-size:24.9px;color:#353535;font-weight:400;letter-spacing:-0.860px">+972 58 611 0490</div>
<div class="t" style="left:2037.70px;top:585.99px;font-size:24.9px;color:#353535;font-weight:400;letter-spacing:-0.774px">Nov 21 - 11:58:58 AM</div>
<div class="t" style="left:2323.50px;top:585.99px;font-size:24.9px;color:#353535;font-weight:400;letter-spacing:-0.700px">6s</div>
<svg class="a" style="left:2584px;top:582.375px" width="26" height="28" viewBox="0 0 26 28"><path d="M3 3.8 C3 1.6 5 0.5 6.9 1.5 L21.6 9.6 C23.4 10.6 23.4 13 21.6 14 L6.9 22.2 C5 23.2 3 22.1 3 19.9 Z" fill="#3e525c"/></svg>
<svg class="a" style="left:2796.9px;top:577.975px" width="20" height="40" viewBox="0 0 20 40"><circle cx="10" cy="9.4" r="3.6" fill="#3e525c"/><circle cx="10" cy="20.4" r="3.6" fill="#3e525c"/><circle cx="10" cy="31.4" r="3.6" fill="#3e525c"/></svg>
<svg class="a" style="left:572px;top:674.4050000000001px" width="22" height="22" viewBox="0 0 22 22"><path d="M2.15 1.3 V19.35 H20.9 M19.6 2 L3.2 18.4" fill="none" stroke="#e8492e" stroke-width="2.8" stroke-linejoin="miter"/></svg>
<div class="t" style="left:609.60px;top:659.72px;font-size:24.9px;color:#353535;font-weight:400;letter-spacing:1.167px">Inbound</div>
<div class="t" style="left:610.60px;top:691.12px;font-size:21px;color:#a3a3a3;font-weight:400;letter-spacing:0.392px">Outside of business hours</div>
<svg class="a" style="left:1295.2px;top:667.31px" width="36" height="36" viewBox="0 0 36 36"><defs><clipPath id="fc4"><path d="M18 0 C31.5 0 36 4.5 36 18 C36 31.5 31.5 36 18 36 C4.5 36 0 31.5 0 18 C0 4.5 4.5 0 18 0 Z"/></clipPath></defs><g clip-path="url(#fc4)"><rect width="36" height="36" fill="#fff"/><rect y="1.30" width="36" height="2.6" fill="#ee5236"/><rect y="6.60" width="36" height="2.6" fill="#ee5236"/><rect y="12.20" width="36" height="2.6" fill="#ee5236"/><rect y="17.80" width="36" height="2.6" fill="#ee5236"/><rect y="23.30" width="36" height="2.6" fill="#ee5236"/><rect y="29.10" width="36" height="2.6" fill="#ee5236"/><rect y="34.30" width="36" height="2.6" fill="#ee5236"/><rect width="18" height="20.2" fill="#2f7cc6"/><circle cx="1.6" cy="2.2" r="0.75" fill="#fff"/><circle cx="4.6" cy="2.2" r="0.75" fill="#fff"/><circle cx="7.6" cy="2.2" r="0.75" fill="#fff"/><circle cx="10.6" cy="2.2" r="0.75" fill="#fff"/><circle cx="13.6" cy="2.2" r="0.75" fill="#fff"/><circle cx="16.6" cy="2.2" r="0.75" fill="#fff"/><circle cx="3.1" cy="5.1" r="0.75" fill="#fff"/><circle cx="6.1" cy="5.1" r="0.75" fill="#fff"/><circle cx="9.1" cy="5.1" r="0.75" fill="#fff"/><circle cx="12.1" cy="5.1" r="0.75" fill="#fff"/><circle cx="15.1" cy="5.1" r="0.75" fill="#fff"/><circle cx="1.6" cy="8.0" r="0.75" fill="#fff"/><circle cx="4.6" cy="8.0" r="0.75" fill="#fff"/><circle cx="7.6" cy="8.0" r="0.75" fill="#fff"/><circle cx="10.6" cy="8.0" r="0.75" fill="#fff"/><circle cx="13.6" cy="8.0" r="0.75" fill="#fff"/><circle cx="16.6" cy="8.0" r="0.75" fill="#fff"/><circle cx="3.1" cy="10.9" r="0.75" fill="#fff"/><circle cx="6.1" cy="10.9" r="0.75" fill="#fff"/><circle cx="9.1" cy="10.9" r="0.75" fill="#fff"/><circle cx="12.1" cy="10.9" r="0.75" fill="#fff"/><circle cx="15.1" cy="10.9" r="0.75" fill="#fff"/><circle cx="1.6" cy="13.8" r="0.75" fill="#fff"/><circle cx="4.6" cy="13.8" r="0.75" fill="#fff"/><circle cx="7.6" cy="13.8" r="0.75" fill="#fff"/><circle cx="10.6" cy="13.8" r="0.75" fill="#fff"/><circle cx="13.6" cy="13.8" r="0.75" fill="#fff"/><circle cx="16.6" cy="13.8" r="0.75" fill="#fff"/><circle cx="3.1" cy="16.7" r="0.75" fill="#fff"/><circle cx="6.1" cy="16.7" r="0.75" fill="#fff"/><circle cx="9.1" cy="16.7" r="0.75" fill="#fff"/><circle cx="12.1" cy="16.7" r="0.75" fill="#fff"/><circle cx="15.1" cy="16.7" r="0.75" fill="#fff"/></g></svg>
<div class="t" style="left:1343.30px;top:673.42px;font-size:24.9px;color:#353535;font-weight:400;letter-spacing:0.015px">NYC Office - Custo...</div>
<div class="t" style="left:1667.90px;top:673.42px;font-size:24.9px;color:#353535;font-weight:400;letter-spacing:-0.643px">+1 650 449 8027</div>
<div class="t" style="left:2037.70px;top:673.42px;font-size:24.9px;color:#353535;font-weight:400;letter-spacing:-0.774px">Nov 21 - 11:58:33 AM</div>
<svg class="a" style="left:2796.9px;top:665.4050000000001px" width="20" height="40" viewBox="0 0 20 40"><circle cx="10" cy="9.4" r="3.6" fill="#3e525c"/><circle cx="10" cy="20.4" r="3.6" fill="#3e525c"/><circle cx="10" cy="31.4" r="3.6" fill="#3e525c"/></svg>
<svg class="a" style="left:572px;top:761.835px" width="22" height="22" viewBox="0 0 22 22"><path d="M0.9 2.95 H19.2 V21.3 M1.3 20.6 L18.4 3.5" fill="none" stroke="#e8492e" stroke-width="2.8" stroke-linejoin="miter"/></svg>
<div class="t" style="left:610.60px;top:747.15px;font-size:24.9px;color:#353535;font-weight:400;letter-spacing:1.529px">Outbound</div>
<div class="t" style="left:609.60px;top:778.55px;font-size:21px;color:#a3a3a3;font-weight:400;letter-spacing:0.967px">Not connected</div>
<div class="t" style="left:922.10px;top:760.85px;font-size:24.9px;color:#353535;font-weight:400;letter-spacing:0.314px">Nicolas Sanchez</div>
<svg class="a" style="left:1295.2px;top:754.74px" width="36" height="36" viewBox="0 0 36 36"><defs><clipPath id="fc5"><path d="M18 0 C31.5 0 36 4.5 36 18 C36 31.5 31.5 36 18 36 C4.5 36 0 31.5 0 18 C0 4.5 4.5 0 18 0 Z"/></clipPath></defs><g clip-path="url(#fc5)"><rect width="36" height="36" fill="#ee5236"/><rect y="10.2" width="36" height="16" fill="#f2c400"/><rect x="3.2" y="15.6" width="1.8" height="8.6" fill="#c9ccd6"/><rect x="15.6" y="15.6" width="1.8" height="8.6" fill="#c9ccd6"/><rect x="2.4" y="23.6" width="3.4" height="1.2" fill="#c9ccd6"/><rect x="14.8" y="23.6" width="3.4" height="1.2" fill="#c9ccd6"/><ellipse cx="10.3" cy="13.1" rx="3.4" ry="1.6" fill="#ee5236"/><path d="M6.7 15.4 H13.8 V21.6 Q13.8 24.6 10.25 24.6 Q6.7 24.6 6.7 21.6 Z" fill="#f3d7c8"/><rect x="6.9" y="15.6" width="3.2" height="3.6" fill="#ee5236"/><rect x="10.4" y="19.4" width="3.2" height="4.6" fill="#ee5236"/><rect x="6.9" y="19.4" width="3.2" height="4.6" fill="#f2c400"/><rect x="11" y="16" width="2" height="2.6" fill="#ee5236"/></g></svg>
<div class="t" style="left:1343.30px;top:760.85px;font-size:24.9px;color:#353535;font-weight:400;letter-spacing:-0.020px">Nicolas Sanchez (m...</div>
<div class="t" style="left:1667.90px;top:760.85px;font-size:24.9px;color:#353535;font-weight:400;letter-spacing:-0.527px">+34 646 10 87 40</div>
<div class="t" style="left:2037.70px;top:760.85px;font-size:24.9px;color:#353535;font-weight:400;letter-spacing:-0.774px">Nov 21 - 11:58:29 AM</div>
<svg class="a" style="left:2796.9px;top:752.835px" width="20" height="40" viewBox="0 0 20 40"><circle cx="10" cy="9.4" r="3.6" fill="#3e525c"/><circle cx="10" cy="20.4" r="3.6" fill="#3e525c"/><circle cx="10" cy="31.4" r="3.6" fill="#3e525c"/></svg>
<svg class="a" style="left:572px;top:849.265px" width="22" height="22" viewBox="0 0 22 22"><path d="M0.9 2.95 H19.2 V21.3 M1.3 20.6 L18.4 3.5" fill="none" stroke="#e8492e" stroke-width="2.8" stroke-linejoin="miter"/></svg>
<div class="t" style="left:610.60px;top:834.58px;font-size:24.9px;color:#353535;font-weight:400;letter-spacing:1.529px">Outbound</div>
<div class="t" style="left:609.60px;top:865.98px;font-size:21px;color:#a3a3a3;font-weight:400;letter-spacing:0.967px">Not connected</div>
<div class="t" style="left:922.10px;top:848.28px;font-size:24.9px;color:#353535;font-weight:400;letter-spacing:0.314px">Nicolas Sanchez</div>
<svg class="a" style="left:1295.2px;top:842.16px" width="36" height="36" viewBox="0 0 36 36"><defs><clipPath id="fc6"><path d="M18 0 C31.5 0 36 4.5 36 18 C36 31.5 31.5 36 18 36 C4.5 36 0 31.5 0 18 C0 4.5 4.5 0 18 0 Z"/></clipPath></defs><g clip-path="url(#fc6)"><rect width="36" height="36" fill="#ee5236"/><rect y="10.2" width="36" height="16" fill="#f2c400"/><rect x="3.2" y="15.6" width="1.8" height="8.6" fill="#c9ccd6"/><rect x="15.6" y="15.6" width="1.8" height="8.6" fill="#c9ccd6"/><rect x="2.4" y="23.6" width="3.4" height="1.2" fill="#c9ccd6"/><rect x="14.8" y="23.6" width="3.4" height="1.2" fill="#c9ccd6"/><ellipse cx="10.3" cy="13.1" rx="3.4" ry="1.6" fill="#ee5236"/><path d="M6.7 15.4 H13.8 V21.6 Q13.8 24.6 10.25 24.6 Q6.7 24.6 6.7 21.6 Z" fill="#f3d7c8"/><rect x="6.9" y="15.6" width="3.2" height="3.6" fill="#ee5236"/><rect x="10.4" y="19.4" width="3.2" height="4.6" fill="#ee5236"/><rect x="6.9" y="19.4" width="3.2" height="4.6" fill="#f2c400"/><rect x="11" y="16" width="2" height="2.6" fill="#ee5236"/></g></svg>
<div class="t" style="left:1343.30px;top:848.28px;font-size:24.9px;color:#353535;font-weight:400;letter-spacing:-0.020px">Nicolas Sanchez (m...</div>
<div class="t" style="left:1667.90px;top:848.28px;font-size:24.9px;color:#353535;font-weight:400;letter-spacing:-0.527px">+34 646 10 87 40</div>
<div class="t" style="left:2037.70px;top:848.28px;font-size:24.9px;color:#353535;font-weight:400;letter-spacing:-0.868px">Nov 21 - 11:57:34 AM</div>
<svg class="a" style="left:2796.9px;top:840.265px" width="20" height="40" viewBox="0 0 20 40"><circle cx="10" cy="9.4" r="3.6" fill="#3e525c"/><circle cx="10" cy="20.4" r="3.6" fill="#3e525c"/><circle cx="10" cy="31.4" r="3.6" fill="#3e525c"/></svg>
<svg class="a" style="left:572px;top:936.695px" width="22" height="22" viewBox="0 0 22 22"><path d="M0.9 2.95 H19.2 V21.3 M1.3 20.6 L18.4 3.5" fill="none" stroke="#e8492e" stroke-width="2.8" stroke-linejoin="miter"/></svg>
<div class="t" style="left:610.60px;top:922.01px;font-size:24.9px;color:#353535;font-weight:400;letter-spacing:1.529px">Outbound</div>
<div class="t" style="left:609.60px;top:953.41px;font-size:21px;color:#a3a3a3;font-weight:400;letter-spacing:0.967px">Not connected</div>
<div class="t" style="left:922.10px;top:935.71px;font-size:24.9px;color:#353535;font-weight:400;letter-spacing:0.400px">Mark Freckleton</div>
<svg class="a" style="left:1295.2px;top:929.60px" width="36" height="36" viewBox="0 0 36 36"><defs><clipPath id="fc7"><path d="M18 0 C31.5 0 36 4.5 36 18 C36 31.5 31.5 36 18 36 C4.5 36 0 31.5 0 18 C0 4.5 4.5 0 18 0 Z"/></clipPath></defs><g clip-path="url(#fc7)"><rect width="36" height="36" fill="#2f7cc6"/><path d="M0 0 L36 36 M36 0 L0 36" stroke="#fff" stroke-width="6"/><path d="M0 0 L18 18 M36 36 L18 18" stroke="#ee5236" stroke-width="2" transform="translate(-1.4 1.4)"/><path d="M36 0 L18 18 M0 36 L18 18" stroke="#ee5236" stroke-width="2" transform="translate(1.4 1.4)"/><path d="M18 0 V36 M0 18 H36" stroke="#fff" stroke-width="9.4"/><path d="M18 0 V36 M0 18 H36" stroke="#ee5236" stroke-width="5.8"/></g></svg>
<div class="t" style="left:1343.30px;top:935.71px;font-size:24.9px;color:#353535;font-weight:400;letter-spacing:0.838px">Mark Wednesday</div>
<div class="t" style="left:1667.90px;top:935.71px;font-size:24.9px;color:#353535;font-weight:400;letter-spacing:-0.564px">+44 7702 367654</div>
<div class="t" style="left:2037.70px;top:935.71px;font-size:24.9px;color:#353535;font-weight:400;letter-spacing:-1.021px">Nov 21 - 11:56:21 AM</div>
<svg class="a" style="left:2796.9px;top:927.695px" width="20" height="40" viewBox="0 0 20 40"><circle cx="10" cy="9.4" r="3.6" fill="#3e525c"/><circle cx="10" cy="20.4" r="3.6" fill="#3e525c"/><circle cx="10" cy="31.4" r="3.6" fill="#3e525c"/></svg>
<svg class="a" style="left:572px;top:1024.125px" width="22" height="22" viewBox="0 0 22 22"><path d="M0.9 2.95 H19.2 V21.3 M1.3 20.6 L18.4 3.5" fill="none" stroke="#1f78c8" stroke-width="2.8" stroke-linejoin="miter"/></svg>
<div class="t" style="left:610.60px;top:1023.14px;font-size:24.9px;color:#353535;font-weight:400;letter-spacing:1.529px">Outbound</div>
<div class="t" style="left:922.10px;top:1023.14px;font-size:24.9px;color:#353535;font-weight:400;letter-spacing:0.130px">Enrico Lenz</div>
<svg class="a" style="left:1295.2px;top:1017.02px" width="36" height="36" viewBox="0 0 36 36"><defs><clipPath id="fc8"><path d="M18 0 C31.5 0 36 4.5 36 18 C36 31.5 31.5 36 18 36 C4.5 36 0 31.5 0 18 C0 4.5 4.5 0 18 0 Z"/></clipPath></defs><g clip-path="url(#fc8)"><rect width="36" height="12" fill="#000"/><rect y="12" width="36" height="12" fill="#ee5236"/><rect y="24" width="36" height="12" fill="#f2c400"/></g></svg>
<div class="t" style="left:1343.30px;top:1023.14px;font-size:24.9px;color:#353535;font-weight:400;letter-spacing:0.200px">Enrico - Demo</div>
<div class="t" style="left:1667.90px;top:1023.14px;font-size:24.9px;color:#353535;font-weight:400;letter-spacing:-0.787px">+49 2381 4900130</div>
<div class="t" style="left:2037.70px;top:1023.14px;font-size:24.9px;color:#353535;font-weight:400;letter-spacing:-0.716px">Nov 21 - 11:56:09 AM</div>
<div class="t" style="left:2323.50px;top:1023.14px;font-size:24.9px;color:#353535;font-weight:400;letter-spacing:-0.700px">8s</div>
<svg class="a" style="left:2584px;top:1019.525px" width="26" height="28" viewBox="0 0 26 28"><path d="M3 3.8 C3 1.6 5 0.5 6.9 1.5 L21.6 9.6 C23.4 10.6 23.4 13 21.6 14 L6.9 22.2 C5 23.2 3 22.1 3 19.9 Z" fill="#3e525c"/></svg>
<svg class="a" style="left:2796.9px;top:1015.125px" width="20" height="40" viewBox="0 0 20 40"><circle cx="10" cy="9.4" r="3.6" fill="#3e525c"/><circle cx="10" cy="20.4" r="3.6" fill="#3e525c"/><circle cx="10" cy="31.4" r="3.6" fill="#3e525c"/></svg>
<div class="a" style="left:2916px;top:0px;width:22px;height:1096px;background:#e4e5e9"></div></body></html>
